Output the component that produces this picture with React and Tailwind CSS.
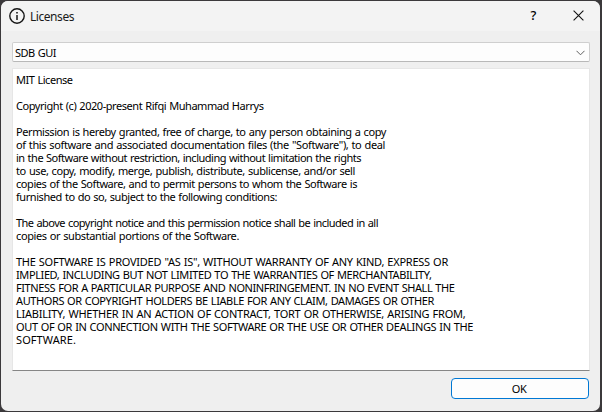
import { useLayoutEffect, useRef, useState } from "react";

const LICENSE = [
  ["MIT License", 56.5],
  null,
  ["Copyright (c) 2020-present Rifqi Muhammad Harrys", 247.5],
  null,
  ["Permission is hereby granted, free of charge, to any person obtaining a copy", 370],
  ['of this software and associated documentation files (the "Software"), to deal', 369],
  ["in the Software without restriction, including without limitation the rights", 345],
  ["to use, copy, modify, merge, publish, distribute, sublicense, and/or sell", 339],
  ["copies of the Software, and to permit persons to whom the Software is", 341],
  ["furnished to do so, subject to the following conditions:", 261],
  null,
  ["The above copyright notice and this permission notice shall be included in all", 362],
  ["copies or substantial portions of the Software.", 223],
  null,
  ['THE SOFTWARE IS PROVIDED "AS IS", WITHOUT WARRANTY OF ANY KIND, EXPRESS OR', 432],
  ["IMPLIED, INCLUDING BUT NOT LIMITED TO THE WARRANTIES OF MERCHANTABILITY,", 415.5],
  ["FITNESS FOR A PARTICULAR PURPOSE AND NONINFRINGEMENT. IN NO EVENT SHALL THE", 438.5],
  ["AUTHORS OR COPYRIGHT HOLDERS BE LIABLE FOR ANY CLAIM, DAMAGES OR OTHER", 418],
  ["LIABILITY, WHETHER IN AN ACTION OF CONTRACT, TORT OR OTHERWISE, ARISING FROM,", 449.5],
  ["OUT OF OR IN CONNECTION WITH THE SOFTWARE OR THE USE OR OTHER DEALINGS IN THE", 457],
  ["SOFTWARE.", 60],
];

/* Text whose tracking is computed so that it spans a given width. */
function Fitted({ text, width }) {
  const ref = useRef(null);
  const [spacing, setSpacing] = useState(0);
  useLayoutEffect(() => {
    const natural = ref.current.getBoundingClientRect().width;
    setSpacing((width - natural) / text.length);
  }, [text, width]);
  return (
    <span
      ref={ref}
      className="inline-block align-top whitespace-pre [word-spacing:0.6px]"
      style={{ letterSpacing: spacing }}
    >
      {text}
    </span>
  );
}

function TitleBar() {
  return (
    <header className="flex h-[30px] shrink-0 items-center bg-[#f3f3f3] pl-2 text-[#1a1a1a]">
      <svg className="mr-[5px] size-4 shrink-0" viewBox="0 0 16 16" fill="none" stroke="#161616">
        <circle cx="8" cy="8" r="7.2" strokeWidth="1.4" />
        <path d="M8 7v5" strokeWidth="1.5" />
        <path d="M8 4v1.6" strokeWidth="1.6" />
      </svg>
      <h1 className="flex-1 pt-[2px] text-xs leading-4">
        <Fitted text="Licenses" width={44} />
      </h1>
      <button className="flex w-[45px] justify-center pb-[3px] text-[13px] leading-4 font-medium text-black">?</button>
      <button className="flex w-[44px] justify-center pb-[2px]" aria-label="Close">
        <svg className="size-[11px]" viewBox="0 0 11 11" fill="none" stroke="#111" strokeWidth="1.1">
          <path d="M.6.6l9.8 9.8M10.4.6L.6 10.4" />
        </svg>
      </button>
    </header>
  );
}

export default function App() {
  return (
    <div className="h-[412px] w-[602px] overflow-hidden bg-[#3b393b] pt-px pr-[2px] pb-px pl-px font-['Noto_Sans','DejaVu_Sans',sans-serif]">
      <main className="flex h-full flex-col overflow-hidden rounded-[7px] bg-[#efefef] text-[11px] leading-[13px] text-black">
        <TitleBar />
        <div className="flex flex-1 flex-col pt-[11px] pr-[10px] pb-[12px] pl-[11px]">
          <div className="flex h-5 shrink-0 items-center justify-between rounded-[2px] border border-[#cfcfcf] border-b-[#b8b8b8] bg-[#fdfdfd] pr-1 pl-[2px]">
            <Fitted text="SDB GUI" width={41} />
            <svg className="mt-px h-[6px] w-[9px]" viewBox="0 0 9 6" fill="none" stroke="#606060">
              <path d="M.5.8l4 4 4-4" />
            </svg>
          </div>
          <div className="mt-[6px] h-[303px] shrink-0 border border-[#e6e6e6] border-b-[#868686] bg-white pt-[4px] pl-[3px]">
            {LICENSE.map((line, i) => (
              <p key={i} className="h-[13px]">
                {line && <Fitted text={line[0]} width={line[1]} />}
              </p>
            ))}
          </div>
          <button className="mt-[7px] mr-px flex h-[21px] w-[138px] shrink-0 items-center justify-center self-end rounded-[4px] border border-[#0078d4] bg-[#fdfdfd] pr-[2px]">
            <Fitted text="OK" width={14.5} />
          </button>
        </div>
      </main>
    </div>
  );
}
